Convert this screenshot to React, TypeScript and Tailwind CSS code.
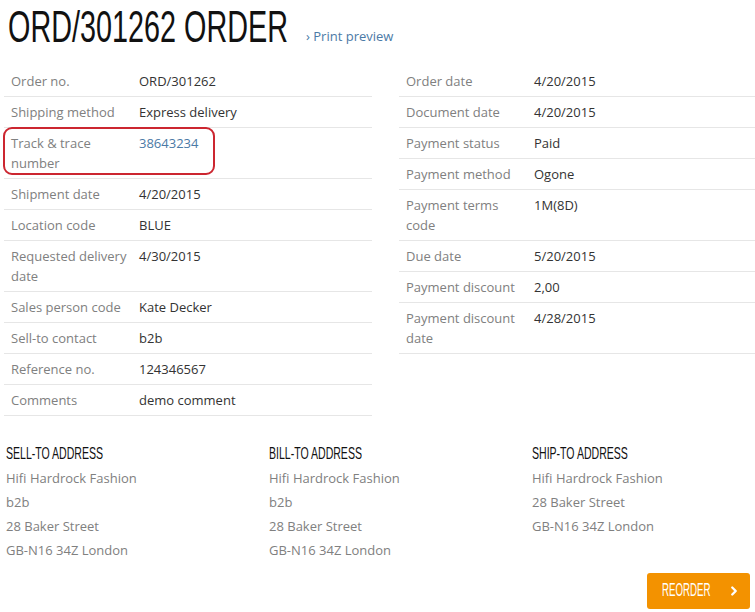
import { ChevronRight } from 'lucide-react';

type Row = { label: string; value: string; link?: boolean; marked?: boolean };

const leftRows: Row[] = [
  { label: 'Order no.', value: 'ORD/301262' },
  { label: 'Shipping method', value: 'Express delivery' },
  { label: 'Track & trace number', value: '38643234', link: true, marked: true },
  { label: 'Shipment date', value: '4/20/2015' },
  { label: 'Location code', value: 'BLUE' },
  { label: 'Requested delivery date', value: '4/30/2015' },
  { label: 'Sales person code', value: 'Kate Decker' },
  { label: 'Sell-to contact', value: 'b2b' },
  { label: 'Reference no.', value: '124346567' },
  { label: 'Comments', value: 'demo comment' },
];

const rightRows: Row[] = [
  { label: 'Order date', value: '4/20/2015' },
  { label: 'Document date', value: '4/20/2015' },
  { label: 'Payment status', value: 'Paid' },
  { label: 'Payment method', value: 'Ogone' },
  { label: 'Payment terms code', value: '1M(8D)' },
  { label: 'Due date', value: '5/20/2015' },
  { label: 'Payment discount', value: '2,00' },
  { label: 'Payment discount date', value: '4/28/2015' },
];

const addresses = [
  { title: 'Sell-to address', lines: ['Hifi Hardrock Fashion', 'b2b', '28 Baker Street', 'GB-N16 34Z London'] },
  { title: 'Bill-to address', lines: ['Hifi Hardrock Fashion', 'b2b', '28 Baker Street', 'GB-N16 34Z London'] },
  { title: 'Ship-to address', lines: ['Hifi Hardrock Fashion', '28 Baker Street', 'GB-N16 34Z London'] },
];

// no narrow display face installed, so squeeze Liberation Sans horizontally
const condensed = "font-['Liberation_Sans',Arial,sans-serif]";

const InfoTable = ({ rows }: { rows: Row[] }) => (
  <div className="flex flex-col">
    {rows.map((r) => (
      <div key={r.label} className="relative flex border-b border-[#e6e6e6] py-[5px] leading-5">
        <div className="w-[135px] shrink-0 pl-[7px] pr-2 text-[#808080]">{r.label}</div>
        <div className={r.link ? 'text-[#4b7aa6]' : 'text-[#333]'}>{r.value}</div>
        {r.marked && (
          <div className="pointer-events-none absolute left-[-1px] top-[-1px] h-[48px] w-[212px] rounded-[9px] border-2 border-[#cc2630]" />
        )}
      </div>
    ))}
  </div>
);

export default function App() {
  return (
    <div className="h-[612px] w-[755px] overflow-hidden bg-white font-['Open_Sans',sans-serif] text-[13px]">
      {/* Title */}
      <div className="flex items-end pl-[8px] pt-[2px]">
        <div className="w-[298px] shrink-0">
          <h1 className={`${condensed} inline-block origin-left [transform:scaleX(0.64)] whitespace-nowrap text-[45px] leading-[50px] text-[#111]`}>
            ORD/301262 ORDER
          </h1>
        </div>
        <a className="mb-[6px] text-[13px] text-[#4b7aa6]">› Print preview</a>
      </div>

      {/* Order details */}
      <div className="mt-[14px] grid grid-cols-[368px_1fr] gap-[27px] pl-[4px]">
        <InfoTable rows={leftRows} />
        <InfoTable rows={rightRows} />
      </div>

      {/* Addresses */}
      <div className="mt-[28px] grid grid-cols-[263px_263px_1fr] pl-[6px]">
        {addresses.map((a) => (
          <div key={a.title}>
            <div className={`${condensed} inline-block origin-left [transform:scaleX(0.62)] whitespace-nowrap text-[17px] uppercase leading-5 text-[#111]`}>
              {a.title}
            </div>
            <div className="mt-[1px] flex flex-col leading-6 text-[#808080]">
              {a.lines.map((l, i) => (
                <span key={i}>{l}</span>
              ))}
            </div>
          </div>
        ))}
      </div>

      {/* Reorder */}
      <div className="flex justify-end pr-[5px]">
        <button className="mt-[11px] flex h-[36px] w-[103px] items-center rounded-[3px] bg-[#f39200] pl-[15px] text-white">
          <div className="w-[50px] text-left">
            <span className={`${condensed} inline-block origin-left [transform:scaleX(0.54)] text-[18px]`}>REORDER</span>
          </div>
          <ChevronRight className="ml-auto mr-[9px] h-[14px] w-[14px]" strokeWidth={4} />
        </button>
      </div>
    </div>
  );
}
